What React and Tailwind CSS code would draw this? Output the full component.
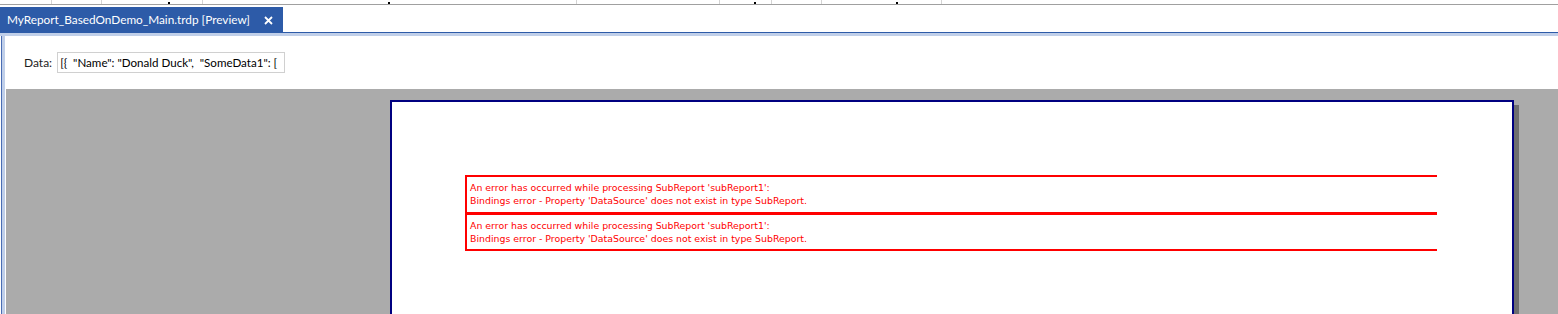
import React from "react";

const segs = [
  { w: 52 },
  { w: 50 },
  { w: 101, mark: 66 },
  { w: 374, mark: 185 },
  { w: 143 },
  { w: 52, mark: 34 },
  { w: 50 },
  { w: 120, mark: 74 },
];

function ErrorText() {
  return (
    <div className="pl-[3px] pt-[4px] text-[9.4px] leading-[13px] text-[#ff0000] whitespace-nowrap" style={{ fontFamily: "'DejaVu Sans', 'Liberation Sans', sans-serif" }}>
      <div>An error has occurred while processing SubReport 'subReport1':</div>
      <div>Bindings error - Property 'DataSource' does not exist in type SubReport.</div>
    </div>
  );
}

export default function App() {
  return (
    <div
      className="w-[1558px] h-[314px] overflow-hidden bg-white flex flex-col"
      style={{ fontFamily: "Lato, 'Noto Sans', sans-serif" }}
    >
      {/* top strip */}
      <div className="h-[5px] flex border-b border-[#a0a0a0] shrink-0">
        {segs.map((s, i) => (
          <div key={i} className="h-[4px] border-r border-[#d4d4d4] relative" style={{ width: s.w }}>
            {s.mark ? <span className="absolute bottom-0 h-[2px] w-[2px] bg-black" style={{ left: s.mark }} /> : null}
          </div>
        ))}
      </div>
      <div className="h-[2px] shrink-0" />
      {/* tab row */}
      <div className="h-[25px] flex shrink-0">
        <div className="w-[283px] bg-[#2d5ba8] flex items-center pl-[7px] text-white text-[11.8px]">
          <span className="flex-1 whitespace-nowrap">MyReport_BasedOnDemo_Main.trdp [Preview]</span>
          <svg width="9" height="9" viewBox="0 0 9 9" className="mr-[10px] mt-[2px] shrink-0">
            <path d="M1 1 L8 8 M8 1 L1 8" stroke="#ffffff" strokeWidth="1.8" />
          </svg>
        </div>
      </div>
      <div className="h-px bg-[#2d5ba8] shrink-0" />
      <div className="h-[3px] bg-[#c0cfe9] shrink-0" />
      {/* content */}
      <div className="flex-1 flex flex-col ml-px border-l border-[#4a6db3] min-h-0">
        <div className="flex-1 flex flex-col border-l-[3px] border-[#c0cfe9] pl-px min-h-0">
          <div className="h-[53px] shrink-0 flex items-start pt-[16px] pl-[18px]">
            <span className="text-[12px] leading-[21px] text-[#1e1e1e] mr-[5px]">Data:</span>
            <div className="w-[228px] h-[21px] border border-[#d0d0d0] bg-white flex items-center pl-[2px] text-[11.6px] text-black whitespace-nowrap overflow-hidden">
              [{"{"}&nbsp;&nbsp;"Name": "Donald Duck",&nbsp;&nbsp;"SomeData1": [
            </div>
          </div>
          <div className="flex-1 bg-[#ababab] pt-[11px] pl-[384px] min-h-0">
            <div className="w-[1124px] h-[260px] bg-white border-2 border-[#000080] shadow-[5px_5px_0_0_#6e6e6e] pt-[73px] pl-[73px]">
              <div className="w-[972px] h-[37px] border-t-2 border-l-2 border-[#ff0000]">
                <ErrorText />
              </div>
              <div className="w-[972px] h-[39px] border-t-[3px] border-l-2 border-b-2 border-[#ff0000]">
                <ErrorText />
              </div>
            </div>
          </div>
        </div>
      </div>
    </div>
  );
}
